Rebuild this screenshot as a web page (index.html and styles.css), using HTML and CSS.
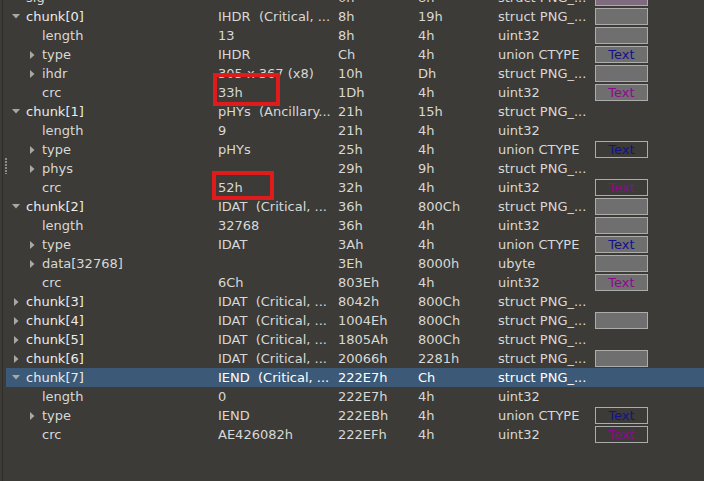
FILE: index.html
```html
<!DOCTYPE html>
<html>
<head>
<meta charset="utf-8">
<link rel="stylesheet" href="styles.css">
</head>
<body>
<div class="view">
  <div class="gutter"><span class="grip"></span></div>
  <div class="tree">
    <div class="row lvl0"><span class="name"><span class="tw"><svg width="8" height="5" viewBox="0 0 8 5"><path d="M0 0H8L4 4.5Z"/></svg></span>sig</span><span class="val"></span><span>0h</span><span>8h</span><span>struct PNG_...</span><span class="cbox fill sig"></span></div>
    <div class="row lvl0"><span class="name top"><span class="tw"><svg width="8" height="5" viewBox="0 0 8 5"><path d="M0 0H8L4 4.5Z"/></svg></span>chunk[0]</span><span class="val">IHDR  (Critical, ...</span><span>8h</span><span>19h</span><span>struct PNG_...</span><span class="cbox fill"></span></div>
    <div class="row lvl1"><span class="name"><span class="tw"></span>length</span><span class="val">13</span><span>8h</span><span>4h</span><span>uint32</span><span class="cbox fill"></span></div>
    <div class="row lvl1"><span class="name"><span class="tw"><svg width="5" height="8" viewBox="0 0 5 8"><path d="M0 0V8L4.5 4Z"/></svg></span>type</span><span class="val">IHDR</span><span>Ch</span><span>4h</span><span>union CTYPE</span><span class="cbox fill navy">Text</span></div>
    <div class="row lvl1"><span class="name"><span class="tw"><svg width="5" height="8" viewBox="0 0 5 8"><path d="M0 0V8L4.5 4Z"/></svg></span>ihdr</span><span class="val">305 x 367 (x8)</span><span>10h</span><span>Dh</span><span>struct PNG_...</span><span class="cbox fill"></span></div>
    <div class="row lvl1"><span class="name"><span class="tw"></span>crc</span><span class="val">33h</span><span>1Dh</span><span>4h</span><span>uint32</span><span class="cbox fill purple">Text</span></div>
    <div class="row lvl0"><span class="name top"><span class="tw"><svg width="8" height="5" viewBox="0 0 8 5"><path d="M0 0H8L4 4.5Z"/></svg></span>chunk[1]</span><span class="val">pHYs  (Ancillary...</span><span>21h</span><span>15h</span><span>struct PNG_...</span><span></span></div>
    <div class="row lvl1"><span class="name"><span class="tw"></span>length</span><span class="val">9</span><span>21h</span><span>4h</span><span>uint32</span><span></span></div>
    <div class="row lvl1"><span class="name"><span class="tw"><svg width="5" height="8" viewBox="0 0 5 8"><path d="M0 0V8L4.5 4Z"/></svg></span>type</span><span class="val">pHYs</span><span>25h</span><span>4h</span><span>union CTYPE</span><span class="cbox navy">Text</span></div>
    <div class="row lvl1"><span class="name"><span class="tw"><svg width="5" height="8" viewBox="0 0 5 8"><path d="M0 0V8L4.5 4Z"/></svg></span>phys</span><span class="val"></span><span>29h</span><span>9h</span><span>struct PNG_...</span><span></span></div>
    <div class="row lvl1"><span class="name"><span class="tw"></span>crc</span><span class="val">52h</span><span>32h</span><span>4h</span><span>uint32</span><span class="cbox purple">Text</span></div>
    <div class="row lvl0"><span class="name top"><span class="tw"><svg width="8" height="5" viewBox="0 0 8 5"><path d="M0 0H8L4 4.5Z"/></svg></span>chunk[2]</span><span class="val">IDAT  (Critical, ...</span><span>36h</span><span>800Ch</span><span>struct PNG_...</span><span class="cbox fill"></span></div>
    <div class="row lvl1"><span class="name"><span class="tw"></span>length</span><span class="val">32768</span><span>36h</span><span>4h</span><span>uint32</span><span class="cbox fill"></span></div>
    <div class="row lvl1"><span class="name"><span class="tw"><svg width="5" height="8" viewBox="0 0 5 8"><path d="M0 0V8L4.5 4Z"/></svg></span>type</span><span class="val">IDAT</span><span>3Ah</span><span>4h</span><span>union CTYPE</span><span class="cbox fill navy">Text</span></div>
    <div class="row lvl1"><span class="name"><span class="tw"><svg width="5" height="8" viewBox="0 0 5 8"><path d="M0 0V8L4.5 4Z"/></svg></span>data[32768]</span><span class="val"></span><span>3Eh</span><span>8000h</span><span>ubyte</span><span class="cbox fill"></span></div>
    <div class="row lvl1"><span class="name"><span class="tw"></span>crc</span><span class="val">6Ch</span><span>803Eh</span><span>4h</span><span>uint32</span><span class="cbox fill purple">Text</span></div>
    <div class="row lvl0"><span class="name top"><span class="tw"><svg width="5" height="8" viewBox="0 0 5 8"><path d="M0 0V8L4.5 4Z"/></svg></span>chunk[3]</span><span class="val">IDAT  (Critical, ...</span><span>8042h</span><span>800Ch</span><span>struct PNG_...</span><span></span></div>
    <div class="row lvl0"><span class="name top"><span class="tw"><svg width="5" height="8" viewBox="0 0 5 8"><path d="M0 0V8L4.5 4Z"/></svg></span>chunk[4]</span><span class="val">IDAT  (Critical, ...</span><span>1004Eh</span><span>800Ch</span><span>struct PNG_...</span><span class="cbox fill"></span></div>
    <div class="row lvl0"><span class="name top"><span class="tw"><svg width="5" height="8" viewBox="0 0 5 8"><path d="M0 0V8L4.5 4Z"/></svg></span>chunk[5]</span><span class="val">IDAT  (Critical, ...</span><span>1805Ah</span><span>800Ch</span><span>struct PNG_...</span><span></span></div>
    <div class="row lvl0"><span class="name top"><span class="tw"><svg width="5" height="8" viewBox="0 0 5 8"><path d="M0 0V8L4.5 4Z"/></svg></span>chunk[6]</span><span class="val">IDAT  (Critical, ...</span><span>20066h</span><span>2281h</span><span>struct PNG_...</span><span class="cbox fill"></span></div>
    <div class="row lvl0 sel"><span class="name top"><span class="tw"><svg width="8" height="5" viewBox="0 0 8 5"><path d="M0 0H8L4 4.5Z"/></svg></span>chunk[7]</span><span class="val">IEND  (Critical, ...</span><span>222E7h</span><span>Ch</span><span>struct PNG_...</span><span></span></div>
    <div class="row lvl1"><span class="name"><span class="tw"></span>length</span><span class="val">0</span><span>222E7h</span><span>4h</span><span>uint32</span><span></span></div>
    <div class="row lvl1"><span class="name"><span class="tw"><svg width="5" height="8" viewBox="0 0 5 8"><path d="M0 0V8L4.5 4Z"/></svg></span>type</span><span class="val">IEND</span><span>222EBh</span><span>4h</span><span>union CTYPE</span><span class="cbox navy">Text</span></div>
    <div class="row lvl1"><span class="name"><span class="tw"></span>crc</span><span class="val">AE426082h</span><span>222EFh</span><span>4h</span><span>uint32</span><span class="cbox purple">Text</span></div>
  </div>
  <div class="mark mark1"></div>
  <div class="mark mark2"></div>
</div>
</body>
</html>
```

FILE: styles.css
```css
html, body {
  margin: 0;
  padding: 0;
  background: #3c3b37;
  overflow: hidden;
}
body {
  width: 704px;
  height: 481px;
  font-family: "DejaVu Sans", "Liberation Sans", sans-serif;
  font-size: 13px;
  color: #d8d8d6;
}
.view {
  position: relative;
  display: flex;
  width: 704px;
  height: 481px;
  overflow: hidden;
}
.gutter {
  position: relative;
  width: 3px;
  margin-left: 2px;
  margin-right: 1px;
  border-left: 1px solid #2e2d2a;
  box-sizing: border-box;
  flex: none;
}
.grip {
  position: absolute;
  left: 2px;
  top: 158px;
  width: 2px;
  height: 16px;
  background: repeating-linear-gradient(to bottom, #8c8b88 0 2px, transparent 2px 3px);
}
.tree {
  flex: 1;
  margin-top: -12px;
  display: flex;
  flex-direction: column;
}
.row {
  display: grid;
  grid-template-columns: 212px 120px 80px 80px 97px 53px 1fr;
  height: 19px;
  line-height: 19px;
  white-space: pre;
}
.row > span {
  overflow: hidden;
}
.row.sel {
  background: #3c5a78;
  color: #ffffff;
}
.name {
  display: flex;
  align-items: center;
}
.name.top {
  color: #ebebea;
}
.lvl1 .name {
  padding-left: 16px;
}
.tw {
  width: 20px;
  height: 19px;
  display: flex;
  align-items: center;
  justify-content: center;
  flex: none;
}
.tw svg {
  fill: #a9a8a5;
  display: block;
}
.lvl0 .tw svg[width="8"] {
  margin-top: -1px;
}
.cbox {
  align-self: start;
  margin-top: 1px;
  height: 17px;
  box-sizing: border-box;
  border: 1px solid #acacab;
  text-align: center;
  line-height: 15px;
}
.cbox.fill {
  background: #6f6f6f;
}
.cbox.sig {
  background: #7e6c7e;
}
.cbox.navy {
  color: #12128c;
}
.cbox.purple {
  color: #8c0c8c;
}
.mark {
  position: absolute;
  border: 4px solid #e01b1b;
  box-sizing: border-box;
}
.mark1 {
  left: 213px;
  top: 73px;
  width: 67px;
  height: 33px;
}
.mark2 {
  left: 212px;
  top: 171px;
  width: 62px;
  height: 29px;
}
```
